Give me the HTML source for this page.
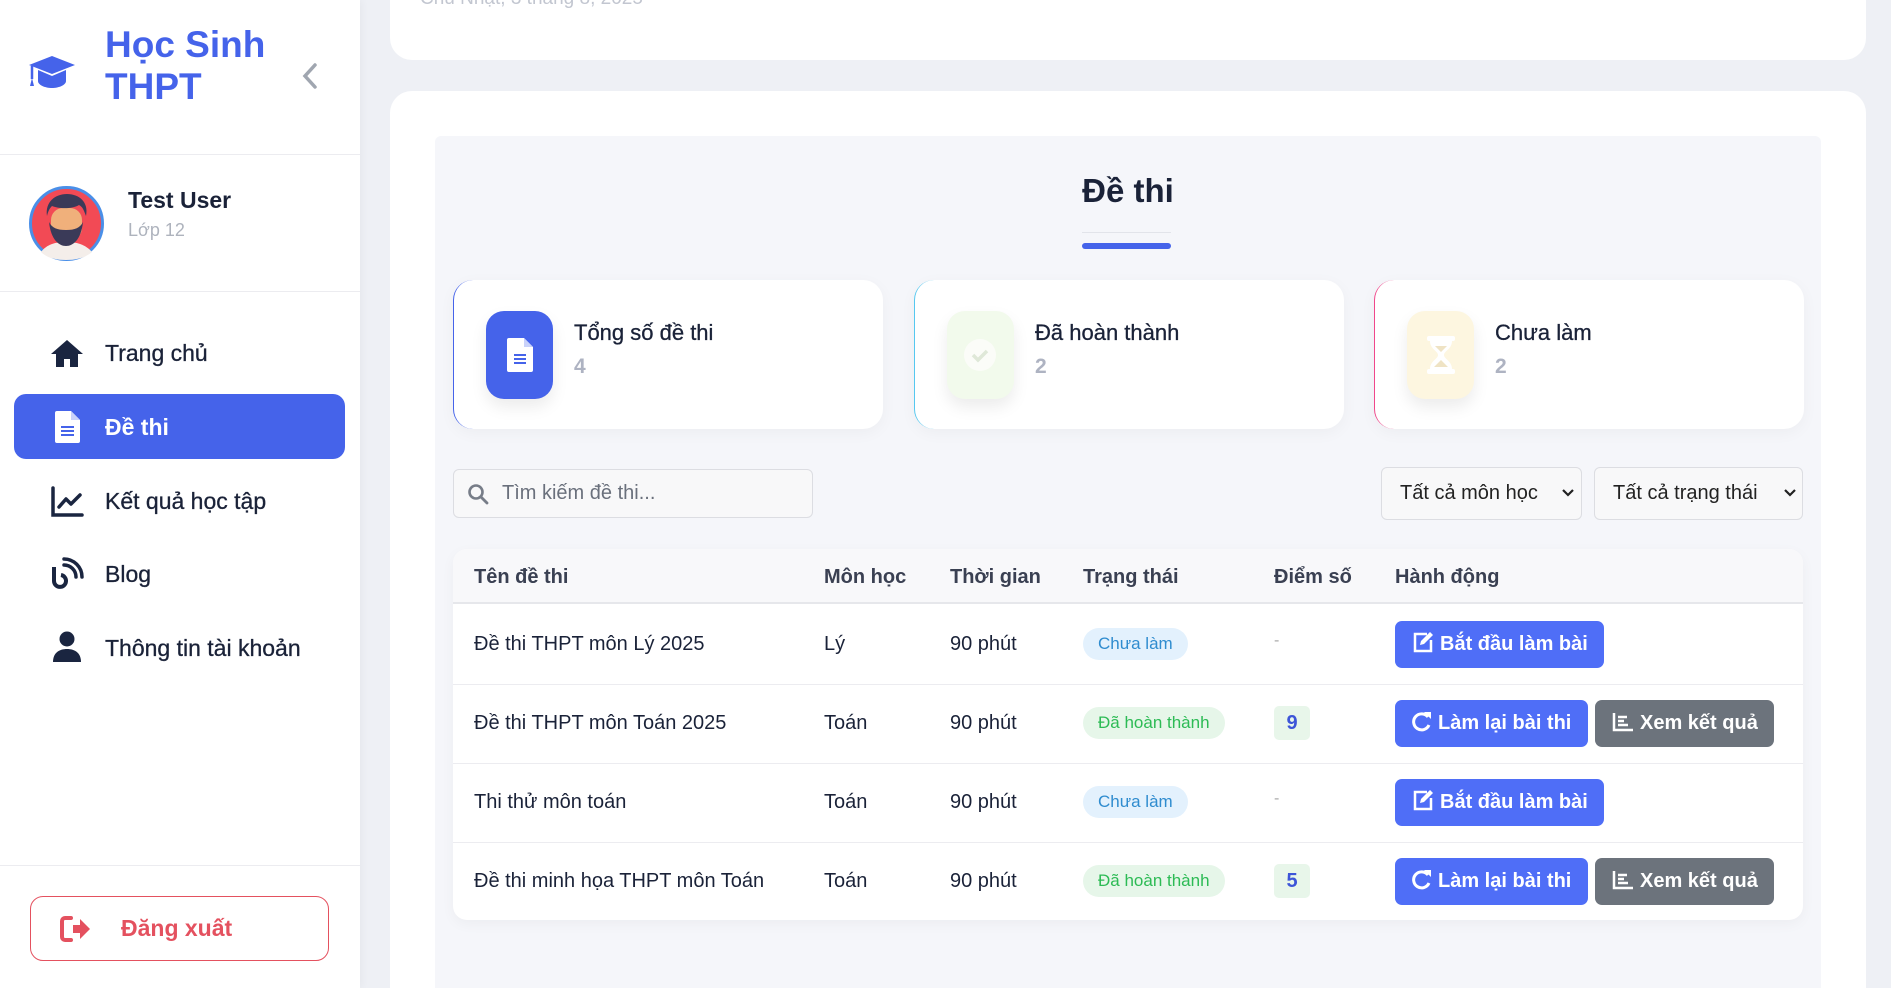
<!DOCTYPE html>
<html><head><meta charset="utf-8"><style>
*{box-sizing:border-box;margin:0;padding:0}
html,body{width:1891px;height:988px;overflow:hidden}
body{background:#eef0f5;font-family:"Liberation Sans",sans-serif;color:#1a2238;position:relative}
.a{position:absolute}
.side{left:0;top:0;width:360px;height:988px;background:#fff;box-shadow:2px 0 8px rgba(0,0,0,.04)}
.hr{left:0;width:360px;height:1px;background:#ececf0}
.nav{left:105px;font-size:23px;color:#1a2238;-webkit-text-stroke:0.3px #1a2238}
.ico{left:50px;width:34px;height:34px}
.card{background:#fff;border-radius:22px}
.stat{top:280px;height:149px;width:430px;background:#fff;border-radius:20px;box-shadow:0 4px 16px rgba(0,0,0,.04)}
.sbox{left:32px;top:31px;width:67px;height:88px;border-radius:18px;box-shadow:0 8px 16px rgba(0,0,0,.08)}
.stt{left:120px;top:40px;font-size:22px;-webkit-text-stroke:0.3px #1a2238}
.stv{left:120px;top:75px;font-size:21px;color:#aeb3c2;font-weight:600}
.th{top:566px;font-size:20px;font-weight:600;color:#3a4052}
.td{font-size:20px;color:#1a2238}
.row{left:453px;width:1350px;height:1px;background:#ececf0}
.badge{height:32px;border-radius:16px;font-size:17px;line-height:32px;padding:0 15px}
.bl{background:#e3f1fd;color:#2f8ccf}
.gr{background:#e6f6e9;color:#2dbb55}
.sc{width:36px;height:34px;background:#e8f6ea;color:#3d55d8;font-weight:700;font-size:20px;line-height:34px;text-align:center;border-radius:5px}
.btn{height:47px;border-radius:7px;color:#fff;font-size:20px;font-weight:600;line-height:47px;padding-left:17px;white-space:nowrap}
.bb{background:#4f6ef7}.bg{background:#6c737c}
.btn svg{vertical-align:-3px;margin-right:6px}
</style></head><body>
<div class="a side"></div>
<svg class="a" style="left:29px;top:56px" width="46" height="36" viewBox="0 0 46 36"><path d="M23 0L46 9 23 18 0 9z" fill="#4563ea"/><path d="M9 14v11c0 4 7 7 14 7s14-3 14-7V14l-14 6z" fill="#4563ea"/><path d="M3 10v13" stroke="#4563ea" stroke-width="2.5"/><path d="M1 30l2-8 2 8z" fill="#4563ea"/></svg>
<div class="a" style="left:105px;top:24px;font-size:37px;font-weight:700;color:#4563ea;line-height:42px">Học Sinh<br>THPT</div>
<svg class="a" style="left:301px;top:62px" width="18" height="28" viewBox="0 0 18 28"><path d="M14 3L4 14l10 11" stroke="#a0a6b0" stroke-width="3.5" fill="none" stroke-linecap="round"/></svg>
<div class="a hr" style="top:154px"></div>
<svg class="a" style="left:29px;top:186px" width="75" height="75" viewBox="0 0 75 75"><circle cx="37.5" cy="37.5" r="36" fill="#f24a55" stroke="#4a8fe8" stroke-width="3"/><path d="M12 66c6-8 15-10 25-10s19 2 26 10c-7 6-16 8-26 8s-19-2-25-8z" fill="#f4eeea"/><rect x="22" y="22" width="31" height="32" rx="12" fill="#f0b07b"/><path d="M20 36c2 18 10 24 17 24s15-6 17-24c-3 6-8 8-17 8s-14-2-17-8z" fill="#3a3a58"/><path d="M18 30c-2-14 8-22 20-22s22 8 19 22c-2-5-3-9-7-11-6 4-20 4-27 1-3 3-4 6-5 10z" fill="#3a3a58"/></svg>
<div class="a" style="left:128px;top:187px;font-size:23px;font-weight:700">Test User</div>
<div class="a" style="left:128px;top:220px;font-size:18px;color:#aeb3bd">Lớp 12</div>
<div class="a hr" style="top:291px"></div>
<svg class="a ico" style="top:337px" viewBox="0 0 34 34"><path d="M17 3L1 17h5v13h8v-8h6v8h8V17h5z" fill="#1a2540"/></svg>
<div class="a nav" style="top:340px">Trang chủ</div>
<div class="a" style="left:14px;top:394px;width:331px;height:65px;background:#4563ea;border-radius:12px"></div>
<svg class="a" style="left:55px;top:411px" width="25" height="32" viewBox="0 0 25 32"><path d="M2 0h14l9 9v21a2 2 0 0 1-2 2H2a2 2 0 0 1-2-2V2a2 2 0 0 1 2-2z" fill="#fff"/><path d="M16 0v9h9" fill="#c9d2fa"/><path d="M6 16h13M6 20h13M6 24h13" stroke="#4563ea" stroke-width="2"/></svg>
<div class="a nav" style="top:414px;color:#fff;font-weight:700;-webkit-text-stroke:0">Đề thi</div>
<svg class="a ico" style="top:485px" viewBox="0 0 34 34"><path d="M3 3v27h29" stroke="#1a2540" stroke-width="3.5" fill="none" stroke-linecap="round"/><path d="M9 22l7-8 5 5 9-9" stroke="#1a2540" stroke-width="3.5" fill="none" stroke-linecap="round" stroke-linejoin="round"/></svg>
<div class="a nav" style="top:488px">Kết quả học tập</div>
<svg class="a ico" style="top:557px" viewBox="0 0 34 34"><path d="M4 10v14a6 6 0 1 0 7-6" stroke="#1a2540" stroke-width="4" fill="none"/><path d="M14 8a12 12 0 0 1 12 12M14 2a18 18 0 0 1 18 18" stroke="#1a2540" stroke-width="3.5" fill="none" stroke-linecap="round"/></svg>
<div class="a nav" style="top:561px">Blog</div>
<svg class="a ico" style="top:630px" viewBox="0 0 34 34"><circle cx="17" cy="9" r="7.5" fill="#1a2540"/><path d="M3 32c0-9 6-13 14-13s14 4 14 13z" fill="#1a2540"/></svg>
<div class="a nav" style="top:635px">Thông tin tài khoản</div>
<div class="a hr" style="top:865px"></div>
<div class="a" style="left:30px;top:896px;width:299px;height:65px;border:1.5px solid #e4515f;border-radius:13px"></div>
<svg class="a" style="left:60px;top:916px" width="32" height="26" viewBox="0 0 32 26"><path d="M11 2H5a3 3 0 0 0-3 3v16a3 3 0 0 0 3 3h6" stroke="#e4515f" stroke-width="4" fill="none" stroke-linecap="round"/><path d="M13 9h7V3l10 10-10 10v-6h-7z" fill="#e4515f"/></svg>
<div class="a" style="left:121px;top:915px;font-size:23px;font-weight:600;color:#e4515f">Đăng xuất</div>

<div class="a card" style="left:390px;top:-30px;width:1476px;height:90px"></div>
<div class="a" style="left:420px;top:-12px;font-size:19px;color:#c2c6d0">Chủ Nhật, 3 tháng 8, 2025</div>
<div class="a card" style="left:390px;top:91px;width:1476px;height:897px;border-radius:22px 22px 0 0"></div>
<div class="a" style="left:435px;top:136px;width:1386px;height:852px;background:#f5f6fa;border-radius:6px 6px 0 0"></div>
<div class="a" style="left:0;top:172px;width:2256px;text-align:center;font-size:33px;font-weight:700">Đề thi</div>
<div class="a" style="left:1082px;top:232px;width:89px;height:1px;background:#e2e4ea"></div>
<div class="a" style="left:1082px;top:243px;width:89px;height:6px;border-radius:3px;background:#4563ea"></div>

<div class="a stat" style="left:453px;border-left:1.5px solid #4563ea">
<div class="a sbox" style="background:#4563ea"><svg class="a" style="left:21px;top:27px" width="26" height="34" viewBox="0 0 26 34"><path d="M2 0h15l9 9v23a2 2 0 0 1-2 2H2a2 2 0 0 1-2-2V2a2 2 0 0 1 2-2z" fill="#fff"/><path d="M17 0v9h9" fill="#c9d2fa"/><path d="M7 17h12M7 21h12M7 25h12" stroke="#4563ea" stroke-width="2"/></svg></div>
<div class="a stt">Tổng số đề thi</div><div class="a stv">4</div></div>
<div class="a stat" style="left:914px;border-left:1.5px solid #56c8f0">
<div class="a sbox" style="background:#f2faec"><svg class="a" style="left:15px;top:26px" width="36" height="36" viewBox="0 0 36 36"><circle cx="18" cy="18" r="16" fill="#fbfcf8"/><path d="M11 18l5 5 9-9" stroke="#dfe8d8" stroke-width="3.5" fill="none"/></svg></div>
<div class="a stt">Đã hoàn thành</div><div class="a stv">2</div></div>
<div class="a stat" style="left:1374px;border-left:1.5px solid #f0478a">
<div class="a sbox" style="background:#fdf6e0"><svg class="a" style="left:19px;top:24px" width="30" height="40" viewBox="0 0 30 40"><rect x="1" y="1" width="28" height="5" rx="2" fill="#fff"/><rect x="1" y="34" width="28" height="5" rx="2" fill="#fff"/><path d="M4 6h22c0 8-8 10-8 14s8 6 8 14H4c0-8 8-10 8-14S4 14 4 6z" fill="#fff"/><path d="M9 11h12l-6 6zM15 25l7 7H8z" fill="#efe3c4"/></svg></div>
<div class="a stt">Chưa làm</div><div class="a stv">2</div></div>

<div class="a" style="left:453px;top:469px;width:360px;height:49px;background:#f8f8f9;border:1px solid #dcdde2;border-radius:6px"></div>
<svg class="a" style="left:467px;top:483px" width="22" height="22" viewBox="0 0 22 22"><circle cx="9" cy="9" r="6.5" stroke="#777d88" stroke-width="2.6" fill="none"/><path d="M14 14l6 6" stroke="#777d88" stroke-width="2.8" stroke-linecap="round"/></svg>
<div class="a" style="left:502px;top:482px;font-size:20px;color:#6a707c">Tìm kiếm đề thi...</div>
<div class="a" style="left:1381px;top:467px;width:201px;height:53px;background:#f8f8f9;border:1px solid #dcdde2;border-radius:6px;font-size:20px;line-height:51px;padding-left:18px;color:#222">Tất cả môn học</div>
<div class="a" style="left:1594px;top:467px;width:209px;height:53px;background:#f8f8f9;border:1px solid #dcdde2;border-radius:6px;font-size:20px;line-height:51px;padding-left:18px;color:#222">Tất cả trạng thái</div>
<svg class="a" style="left:1561px;top:488px" width="14" height="10" viewBox="0 0 14 10"><path d="M2 2l5 5 5-5" stroke="#222" stroke-width="2.2" fill="none"/></svg>
<svg class="a" style="left:1783px;top:488px" width="14" height="10" viewBox="0 0 14 10"><path d="M2 2l5 5 5-5" stroke="#222" stroke-width="2.2" fill="none"/></svg>

<div class="a" style="left:453px;top:549px;width:1350px;height:371px;background:#fff;border-radius:14px;box-shadow:0 4px 14px rgba(0,0,0,.04)"></div>
<div class="a" style="left:453px;top:549px;width:1350px;height:55px;background:#f8f8fa;border-radius:14px 14px 0 0;border-bottom:2px solid #e6e7eb"></div>
<div class="a th" style="left:474px">Tên đề thi</div>
<div class="a th" style="left:824px">Môn học</div>
<div class="a th" style="left:950px">Thời gian</div>
<div class="a th" style="left:1083px">Trạng thái</div>
<div class="a th" style="left:1274px">Điểm số</div>
<div class="a th" style="left:1395px">Hành động</div>
<div class="a row" style="top:684px"></div><div class="a row" style="top:763px"></div><div class="a row" style="top:842px"></div>

<div class="a td" style="left:474px;top:633px">Đề thi THPT môn Lý 2025</div>
<div class="a td" style="left:824px;top:633px">Lý</div>
<div class="a td" style="left:950px;top:633px">90 phút</div>
<div class="a badge bl" style="left:1083px;top:628px">Chưa làm</div>
<div class="a" style="left:1274px;top:632px;color:#aaa">-</div>
<div class="a btn bb" style="left:1395px;top:621px;width:209px"><svg width="22" height="22" viewBox="0 0 22 22"><path d="M15 3H3v17h16V9" stroke="#fff" stroke-width="2.5" fill="none"/><path d="M18 1l3 3-9 9-4 1 1-4z" fill="#fff"/></svg>Bắt đầu làm bài</div>

<div class="a td" style="left:474px;top:712px">Đề thi THPT môn Toán 2025</div>
<div class="a td" style="left:824px;top:712px">Toán</div>
<div class="a td" style="left:950px;top:712px">90 phút</div>
<div class="a badge gr" style="left:1083px;top:707px">Đã hoàn thành</div>
<div class="a sc" style="left:1274px;top:706px">9</div>
<div class="a btn bb" style="left:1395px;top:700px;width:193px"><svg width="20" height="22" viewBox="0 0 20 22"><path d="M16 7a8 8 0 1 0 1 8" stroke="#fff" stroke-width="3" fill="none"/><path d="M12 2h7v7z" fill="#fff"/></svg>Làm lại bài thi</div>
<div class="a btn bg" style="left:1595px;top:700px;width:179px"><svg width="22" height="20" viewBox="0 0 22 20"><path d="M2 1v17h19" stroke="#fff" stroke-width="2.5" fill="none"/><path d="M6 5h9M6 9h6M6 13h10" stroke="#fff" stroke-width="2.5"/></svg>Xem kết quả</div>

<div class="a td" style="left:474px;top:791px">Thi thử môn toán</div>
<div class="a td" style="left:824px;top:791px">Toán</div>
<div class="a td" style="left:950px;top:791px">90 phút</div>
<div class="a badge bl" style="left:1083px;top:786px">Chưa làm</div>
<div class="a" style="left:1274px;top:790px;color:#aaa">-</div>
<div class="a btn bb" style="left:1395px;top:779px;width:209px"><svg width="22" height="22" viewBox="0 0 22 22"><path d="M15 3H3v17h16V9" stroke="#fff" stroke-width="2.5" fill="none"/><path d="M18 1l3 3-9 9-4 1 1-4z" fill="#fff"/></svg>Bắt đầu làm bài</div>

<div class="a td" style="left:474px;top:870px">Đề thi minh họa THPT môn Toán</div>
<div class="a td" style="left:824px;top:870px">Toán</div>
<div class="a td" style="left:950px;top:870px">90 phút</div>
<div class="a badge gr" style="left:1083px;top:865px">Đã hoàn thành</div>
<div class="a sc" style="left:1274px;top:864px">5</div>
<div class="a btn bb" style="left:1395px;top:858px;width:193px"><svg width="20" height="22" viewBox="0 0 20 22"><path d="M16 7a8 8 0 1 0 1 8" stroke="#fff" stroke-width="3" fill="none"/><path d="M12 2h7v7z" fill="#fff"/></svg>Làm lại bài thi</div>
<div class="a btn bg" style="left:1595px;top:858px;width:179px"><svg width="22" height="20" viewBox="0 0 22 20"><path d="M2 1v17h19" stroke="#fff" stroke-width="2.5" fill="none"/><path d="M6 5h9M6 9h6M6 13h10" stroke="#fff" stroke-width="2.5"/></svg>Xem kết quả</div>
</body></html>
